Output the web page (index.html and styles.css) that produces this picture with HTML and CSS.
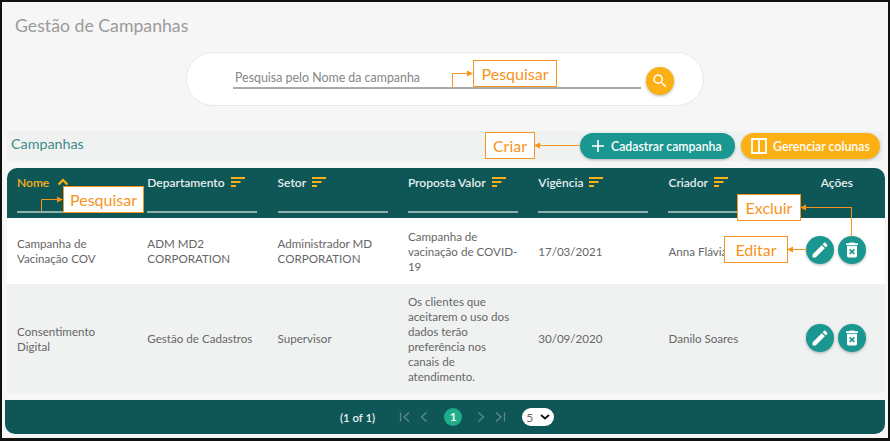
FILE: index.html
```html
<!DOCTYPE html>
<html lang="pt-BR">
<head>
    <meta charset="UTF-8">
    <title>Gestão de Campanhas</title>
    <link rel="stylesheet" href="styles.css">
</head>
<body>
    <div class="frame">
        <h1 class="page-title">Gestão de Campanhas</h1>

        <div class="search-row">
            <div class="search-card">
                <div class="search-input">Pesquisa pelo Nome da campanha</div>
                <button class="search-btn">
                    <svg viewBox="0 0 24 24" width="18" height="18"><path fill="#fff" d="M15.5 14h-.79l-.28-.27A6.47 6.47 0 0 0 16 9.5 6.5 6.5 0 1 0 9.5 16c1.61 0 3.09-.59 4.23-1.57l.27.28v.79l5 4.99L20.49 19l-4.99-5zm-6 0C7.01 14 5 11.99 5 9.5S7.01 5 9.5 5 14 7.01 14 9.5 11.99 14 9.5 14z"/></svg>
                </button>
            </div>
        </div>

        <div class="toolbar">
            <span class="toolbar-title">Campanhas</span>
            <div class="toolbar-actions">
                <button class="pill pill-teal">
                    <svg viewBox="0 0 14 14" width="14" height="14"><path stroke="#fff" stroke-width="1.6" d="M7 1v12M1 7h12"/></svg>
                    Cadastrar campanha
                </button>
                <button class="pill pill-yellow">
                    <svg viewBox="0 0 18 18" width="18" height="18"><path fill="none" stroke="#fff" stroke-width="1.8" d="M2 2h14v14H2zM9 2v14"/></svg>
                    Gerenciar colunas
                </button>
            </div>
        </div>

        <table class="grid">
            <thead>
                <tr>
                    <th class="sorted">
                        <div class="th-label">Nome
                            <svg viewBox="0 0 12 8" width="12" height="8"><path fill="none" stroke="#fdb014" stroke-width="2.2" d="M1.5 6.5L6 2l4.5 4.5"/></svg>
                        </div>
                        <div class="th-filter"></div>
                    </th>
                    <th>
                        <div class="th-label">Departamento <svg class="sort-icon" viewBox="0 0 14 10" width="14" height="10"><path fill="#fdb014" d="M0 0h14v2H0zM0 4h9.5v2H0zM0 8h5v2H0z"/></svg></div>
                        <div class="th-filter"></div>
                    </th>
                    <th>
                        <div class="th-label">Setor <svg class="sort-icon" viewBox="0 0 14 10" width="14" height="10"><path fill="#fdb014" d="M0 0h14v2H0zM0 4h9.5v2H0zM0 8h5v2H0z"/></svg></div>
                        <div class="th-filter"></div>
                    </th>
                    <th>
                        <div class="th-label">Proposta Valor <svg class="sort-icon" viewBox="0 0 14 10" width="14" height="10"><path fill="#fdb014" d="M0 0h14v2H0zM0 4h9.5v2H0zM0 8h5v2H0z"/></svg></div>
                        <div class="th-filter"></div>
                    </th>
                    <th>
                        <div class="th-label">Vigência <svg class="sort-icon" viewBox="0 0 14 10" width="14" height="10"><path fill="#fdb014" d="M0 0h14v2H0zM0 4h9.5v2H0zM0 8h5v2H0z"/></svg></div>
                        <div class="th-filter"></div>
                    </th>
                    <th>
                        <div class="th-label">Criador <svg class="sort-icon" viewBox="0 0 14 10" width="14" height="10"><path fill="#fdb014" d="M0 0h14v2H0zM0 4h9.5v2H0zM0 8h5v2H0z"/></svg></div>
                        <div class="th-filter"></div>
                    </th>
                    <th class="th-actions"><div class="th-label">Ações</div></th>
                </tr>
            </thead>
            <tbody>
                <tr class="row-first">
                    <td>Campanha de Vacinação COV</td>
                    <td>ADM MD2 CORPORATION</td>
                    <td>Administrador MD CORPORATION</td>
                    <td>Campanha de vacinação de COVID-<wbr>19</td>
                    <td>17/03/2021</td>
                    <td>Anna Flávia</td>
                    <td>
                        <div class="actions">
                            <button class="round-btn"><svg viewBox="0 0 24 24" width="20" height="20"><path fill="#fff" d="M3 17.25V21h3.75L17.81 9.94l-3.75-3.75L3 17.25zM20.71 7.04c.39-.39.39-1.02 0-1.41l-2.34-2.34c-.39-.39-1.02-.39-1.41 0l-1.83 1.83 3.75 3.75 1.83-1.83z"/></svg></button>
                            <button class="round-btn"><svg viewBox="0 0 24 24" width="20" height="20"><path fill="#fff" d="M6 19c0 1.1.9 2 2 2h8c1.1 0 2-.9 2-2V7H6v12zm2.46-7.12l1.41-1.41L12 12.59l2.12-2.12 1.41 1.41L13.41 14l2.12 2.12-1.41 1.41L12 15.41l-2.12 2.12-1.41-1.41L10.59 14l-2.13-2.12zM15.5 4l-1-1h-5l-1 1H5v2h14V4z"/></svg></button>
                        </div>
                    </td>
                </tr>
                <tr class="row-second">
                    <td>Consentimento Digital</td>
                    <td>Gestão de Cadastros</td>
                    <td>Supervisor</td>
                    <td>Os clientes que aceitarem o uso dos dados terão preferência nos canais de atendimento.</td>
                    <td>30/09/2020</td>
                    <td>Danilo Soares</td>
                    <td>
                        <div class="actions">
                            <button class="round-btn"><svg viewBox="0 0 24 24" width="20" height="20"><path fill="#fff" d="M3 17.25V21h3.75L17.81 9.94l-3.75-3.75L3 17.25zM20.71 7.04c.39-.39.39-1.02 0-1.41l-2.34-2.34c-.39-.39-1.02-.39-1.41 0l-1.83 1.83 3.75 3.75 1.83-1.83z"/></svg></button>
                            <button class="round-btn"><svg viewBox="0 0 24 24" width="20" height="20"><path fill="#fff" d="M6 19c0 1.1.9 2 2 2h8c1.1 0 2-.9 2-2V7H6v12zm2.46-7.12l1.41-1.41L12 12.59l2.12-2.12 1.41 1.41L13.41 14l2.12 2.12-1.41 1.41L12 15.41l-2.12 2.12-1.41-1.41L10.59 14l-2.13-2.12zM15.5 4l-1-1h-5l-1 1H5v2h14V4z"/></svg></button>
                        </div>
                    </td>
                </tr>
            </tbody>
        </table>

        <div class="pager">
            <span class="pager-count">(1 of 1)</span>
            <div class="pager-nav">
                <svg viewBox="0 0 12 12" width="12" height="12"><path fill="none" stroke="#5d8a88" stroke-width="1.3" d="M1.5 1.5v9M10 1.5L5 6l5 4.500"/></svg>
                <svg viewBox="0 0 12 12" width="12" height="12"><path fill="none" stroke="#5d8a88" stroke-width="1.3" d="M8.500 1.500L3.500 6l5 4.500"/></svg>
            </div>
            <span class="pager-page">1</span>
            <div class="pager-nav">
                <svg viewBox="0 0 12 12" width="12" height="12"><path fill="none" stroke="#5d8a88" stroke-width="1.3" d="M3.500 1.500L8.500 6l-5 4.500"/></svg>
                <svg viewBox="0 0 12 12" width="12" height="12"><path fill="none" stroke="#5d8a88" stroke-width="1.3" d="M10.500 1.500v9M2 1.500L7 6l-5 4.500"/></svg>
            </div>
            <div class="pager-size">
                <span>5</span>
                <svg viewBox="0 0 10 6" width="10" height="6"><path fill="none" stroke="#111" stroke-width="1.800" d="M1 1l4 3.500L9 1"/></svg>
            </div>
        </div>

        <!-- anotações por cima da tela -->
        <svg class="notes-lines" viewBox="0 0 890 441" width="890" height="441">
            <g fill="none" stroke="#f7941d" stroke-width="1">
                <path d="M452.500 87V73.500H468"/>
                <path d="M41.500 212V199.500H58"/>
                <path d="M580 145.500H539"/>
                <path d="M851.500 237V207.500H805"/>
                <path d="M807 249.500H792"/>
            </g>
            <g fill="#f7941d">
                <path d="M473 73.500l-6-3v6z"/>
                <path d="M63 199.500l-6-3v6z"/>
                <path d="M534 145.500l6-3v6z"/>
                <path d="M800 207.500l6-3v6z"/>
                <path d="M787 249.500l6-3v6z"/>
            </g>
        </svg>
        <div class="note note-search">Pesquisar</div>
        <div class="note note-filter">Pesquisar</div>
        <div class="note note-create">Criar</div>
        <div class="note note-delete">Excluir</div>
        <div class="note note-edit">Editar</div>
    </div>
</body>
</html>
```

FILE: styles.css
```css
* {
    box-sizing: border-box;
}

body {
    margin: 0;
    font-family: "Lato", "Open Sans", sans-serif;
    background-color: #000;
}

button {
    font-family: inherit;
    border: none;
    cursor: pointer;
}

.frame {
    position: relative;
    width: 890px;
    height: 441px;
    padding: 0 5px 0 5px;
    background-color: #f6f6f6;
    border-top: 2px solid #111;
    border-left: 2px solid #111;
    border-right: 2px solid #111;
    border-bottom: 3px solid #111;
    overflow: hidden;
}

.page-title {
    margin: 0;
    padding: 13px 0 0 8px;
    height: 50px;
    font-size: 17.700px;
    line-height: 22px;
    font-weight: 400;
    color: #9b9b9b;
}

/* busca */
.search-row {
    display: flex;
    justify-content: center;
    height: 79px;
}

.search-card {
    display: flex;
    align-items: flex-start;
    width: 518px;
    height: 54px;
    padding: 16px 0 0 46px;
    background-color: #fff;
    border: 1px solid #e8e8e8;
    border-radius: 27px;
}

.search-input {
    width: 408px;
    height: 20px;
    padding-left: 2px;
    font-size: 12.400px;
    line-height: 18px;
    color: #858585;
    border-bottom: 2px solid #aaa;
}

.search-btn {
    display: flex;
    align-items: center;
    justify-content: center;
    width: 28px;
    height: 28px;
    margin: -2px 0 0 5px;
    padding: 0;
    background-color: #fdb014;
    border-radius: 50%;
    box-shadow: 0 1px 3px rgba(0, 0, 0, 0.3);
}

/* barra de ações */
.toolbar {
    display: flex;
    justify-content: space-between;
    align-items: center;
    height: 30px;
    padding: 0 3px 0 4px;
    background-color: #f0f2f2;
}

.toolbar-title {
    margin-bottom: 5px;
    font-size: 14.300px;
    color: #3f8a88;
}

.toolbar-actions {
    display: flex;
    gap: 6px;
}

.pill {
    display: flex;
    align-items: center;
    height: 26px;
    font-size: 12.300px;
    font-weight: 600;
    color: #fff;
    border-radius: 13px;
    box-shadow: 0 1px 3px rgba(0, 0, 0, 0.25);
}

.pill-teal {
    gap: 6px;
    width: 155px;
    padding: 0 0 0 11px;
    background-color: #1a9790;
}

.pill-yellow {
    gap: 5px;
    width: 139px;
    padding: 0 0 0 9px;
    background-color: #fdb014;
}

/* tabela */
.grid {
    width: 878px;
    margin-top: 7px;
    border-collapse: separate;
    border-spacing: 0;
    table-layout: fixed;
    font-size: 11.600px;
    line-height: 15px;
    color: #666;
}

.grid th {
    width: 130.300px;
    height: 50px;
    padding: 0 10px;
    vertical-align: top;
    text-align: left;
    color: #e6eeee;
    font-weight: 600;
    font-size: 12px;
    background-color: #0f5757;
}

.grid th:first-child {
    border-top-left-radius: 10px;
}

.grid th:last-child {
    border-top-right-radius: 10px;
}

.grid th.th-actions {
    width: auto;
    text-align: center;
}

.th-label {
    display: flex;
    align-items: center;
    gap: 6px;
    height: 16px;
    margin-top: 6px;
    white-space: nowrap;
}

.th-actions .th-label {
    justify-content: center;
}

.sorted .th-label {
    gap: 8px;
    color: #fdb014;
}

.th-filter {
    width: 110px;
    height: 2px;
    margin-top: 21px;
    background-color: #8fb0ae;
}

.grid td {
    padding: 0 10px;
    vertical-align: middle;
}

.row-first td {
    height: 66px;
    background-color: #fff;
}

.row-second td {
    height: 109px;
    background-color: #f0f2f2;
}

.actions {
    display: flex;
    gap: 4px;
    margin: 0 0 2px 7px;
}

.round-btn {
    display: flex;
    flex: none;
    align-items: center;
    justify-content: center;
    width: 28px;
    height: 28px;
    padding: 0;
    background-color: #1a9790;
    border-radius: 50%;
    box-shadow: 0 1px 3px rgba(0, 0, 0, 0.3);
}

/* rodapé */
.pager {
    display: flex;
    align-items: center;
    justify-content: center;
    gap: 16px;
    width: 880px;
    height: 34px;
    margin: 7px 0 0 -2px;
    padding-left: 4px;
    color: #e6eeee;
    font-size: 11.400px;
    font-weight: 600;
    background-color: #0f5757;
    border-radius: 0 0 10px 10px;
}

.pager-count {
    margin-right: 8px;
}

.pager-nav {
    display: flex;
    gap: 7px;
}

.pager-page {
    width: 18px;
    height: 18px;
    margin: 0 -3px 0 -2px;
    font-size: 12px;
    line-height: 18px;
    text-align: center;
    color: #fff;
    background-color: #1fad8a;
    border-radius: 50%;
}

.pager-size {
    display: flex;
    align-items: center;
    justify-content: space-between;
    width: 32px;
    height: 18px;
    padding: 0 4px;
    font-size: 12px;
    font-weight: 400;
    color: #666;
    background-color: #fff;
    border-radius: 9px;
}

/* anotações */
.notes-lines {
    position: absolute;
    top: -2px;
    left: -2px;
}

.note {
    position: absolute;
    display: flex;
    align-items: center;
    justify-content: center;
    height: 27px;
    font-size: 16px;
    color: #f7941d;
    background-color: #fff;
    border: 1px solid #f7941d;
}

.note-search {
    top: 58px;
    left: 471px;
    width: 84px;
}

.note-filter {
    top: 184px;
    left: 61px;
    width: 81px;
}

.note-create {
    top: 130px;
    left: 483px;
    width: 50px;
}

.note-delete {
    top: 192px;
    left: 735px;
    width: 64px;
}

.note-edit {
    top: 234px;
    left: 722px;
    width: 64px;
}
```
